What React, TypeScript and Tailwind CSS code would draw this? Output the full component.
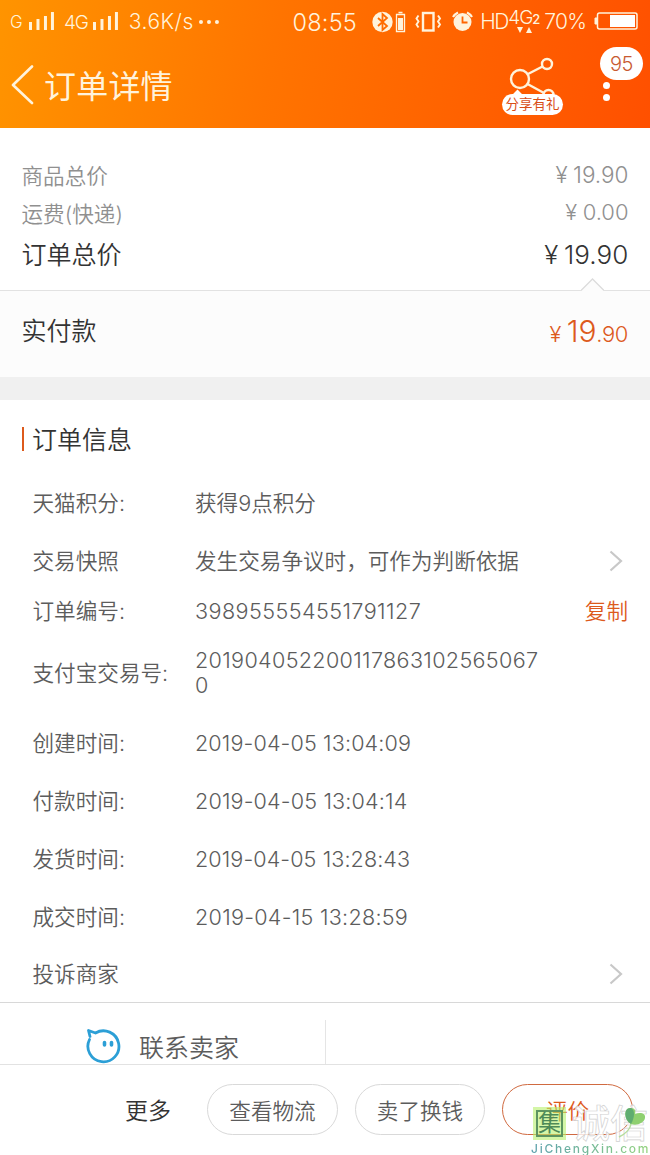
import clsx from 'clsx'

const rows = [
  { label: '天猫积分:', value: '获得9点积分', height: 'h-[57px]' },
  { label: '交易快照', value: '发生交易争议时，可作为判断依据', height: 'h-[58px]', arrow: true },
  { label: '订单编号:', value: '398955554551791127', height: 'h-[42px]', copy: true, tracking: 'tracking-[0.430px]' },
  { label: '支付宝交易号:', value: '2019040522001178631025650670', height: 'h-[82px]', tracking: 'tracking-[0.330px]' },
  { label: '创建时间:', value: '2019-04-05 13:04:09', height: 'h-[58px]', tracking: 'tracking-[0.120px]' },
  { label: '付款时间:', value: '2019-04-05 13:04:14', height: 'h-[58px]', tracking: 'tracking-[0.150px]' },
  { label: '发货时间:', value: '2019-04-05 13:28:43', height: 'h-[58px]', tracking: 'tracking-[0.080px]' },
  { label: '成交时间:', value: '2019-04-15 13:28:59', height: 'h-[58px]', tracking: 'tracking-[0.270px]' },
  { label: '投诉商家', value: '', height: 'h-[56px]', arrow: true },
]

function Signal() {
  return (
    <svg width="26" height="19" viewBox="0 0 26 19" fill="currentColor">
      <rect x="0" y="10" width="3" height="8" />
      <rect x="7.5" y="7" width="3" height="11" />
      <rect x="15" y="4" width="3" height="14" />
      <rect x="22" y="0" width="3" height="18" />
    </svg>
  )
}

function StatusIcons() {
  return (
    <svg className="shrink-0" width="102" height="24" viewBox="0 0 102 24" fill="none" stroke="currentColor">
      <circle cx="10.5" cy="12" r="10.2" fill="currentColor" stroke="none" />
      <path d="M6 8l9 8-4.500 4V4l4.500 4-9 8" stroke="#ff6c00" strokeWidth="1.8" />
      <path d="M24.500 4.500h8v17h-8zM26.500 2.500h4" strokeWidth="1.3" />
      <rect x="26" y="8" width="5" height="12" fill="currentColor" stroke="none" />
      <rect x="51" y="3" width="10.500" height="17.500" strokeWidth="2.400" />
      <path d="M46.500 5.500l-2 3 2 3-2 3 2 3M66 5.500l2 3-2 3 2 3-2 3" strokeWidth="1.900" />
      <circle cx="90.500" cy="12" r="9" fill="currentColor" stroke="none" />
      <path d="M81 7a13 13 0 0 1 5-4.500M100 7a13 13 0 0 0-5-4.500" strokeWidth="2.200" />
      <path d="M90.500 6.500v6h5" stroke="#ff6500" strokeWidth="1.800" />
    </svg>
  )
}

function StatusBar() {
  return (
    <div className="flex h-[43px] items-center pl-[10px] pr-[12px] text-[#fff3dc]">
      <span className="w-[19px] pt-[3px] text-[17px]">G</span>
      <Signal />
      <span className="ml-[9px] w-[29px] pt-[3px] text-[19px] tracking-[-1.200px]">4G</span>
      <Signal />
      <span className="ml-[10px] w-[68px] whitespace-nowrap text-[21px] tracking-[0.500px]">3.6K/s</span>
      <svg width="24" height="6" viewBox="0 0 24 6" fill="currentColor">
        <circle cx="4" cy="3" r="2" />
        <circle cx="12" cy="3" r="2" />
        <circle cx="20" cy="3" r="2" />
      </svg>
      <span className="ml-[72px] w-[80px] whitespace-nowrap pt-[2px] text-[23.500px] tracking-[0.200px]">08:55</span>
      <StatusIcons />
      <span className="ml-[6px] w-[28px] text-[21px] tracking-[-1.500px]">HD</span>
      <div className="relative h-[28px] w-[36px]">
        <div className="flex items-start leading-[20px] tracking-[-1px]">
          <span className="text-[19px]">4G</span>
          <span className="pt-[1px] text-[13px] font-medium">2</span>
        </div>
        <svg className="absolute left-[9px] top-[19px]" width="15" height="6" viewBox="0 0 15 6" fill="currentColor">
          <path d="M0 0h6L3 6zM9 6h6l-3-6z" />
        </svg>
      </div>
      <span className="w-[50px] whitespace-nowrap pt-px text-[21px] tracking-[-0.600px]">70%</span>
      <svg className="-mt-[2px] shrink-0" width="44" height="18" viewBox="0 0 44 18">
        <path d="M3 6H1v6h2" fill="currentColor" stroke="currentColor" />
        <rect x="3.500" y="1" width="39.500" height="16" rx="2" fill="none" stroke="currentColor" strokeWidth="1.500" />
        <rect x="16" y="3" width="25" height="12" fill="#fff" />
      </svg>
    </div>
  )
}

function Header() {
  return (
    <header className="h-[128px] bg-[linear-gradient(100deg,#ff9400_0%,#ff7400_42%,#ff5000_100%)]">
      <StatusBar />
      <div className="flex h-[85px] text-[#fff3dc]">
        <svg className="ml-[11px] mt-[22px]" width="24" height="40" viewBox="0 0 24 40" fill="none" stroke="currentColor" strokeWidth="2.600">
          <path d="M21 1.500L2 20l19 18" strokeLinecap="round" strokeLinejoin="round" />
        </svg>
        <h1 className="ml-[9px] mt-[21px] text-[32px] font-normal leading-[46px] tracking-[0.200px]">订单详情</h1>
        <div className="relative ml-auto mt-[13px] h-[60px] w-[62px]">
          <svg className="ml-[6px]" width="50" height="46" viewBox="0 0 50 46" fill="none" stroke="currentColor" strokeWidth="2.400">
            <circle cx="12" cy="23" r="9" />
            <circle cx="39" cy="8" r="5" />
            <circle cx="40.500" cy="39" r="5" />
            <path d="M20 18l14.500-7.500M19.500 28L36 37" />
          </svg>
          <div className="absolute left-[12px] top-[35px] size-[7px] rotate-45 bg-white" />
          <div className="absolute left-0 top-[38px] h-[21px] w-[61px] whitespace-nowrap rounded-full bg-white text-center text-[13.500px] font-normal leading-[21px] text-[#d94e18]">分享有礼</div>
        </div>
        <div className="relative ml-[36px] mt-[4px] flex w-[50px] flex-col">
          <div className="h-[33px] w-[43px] rounded-full bg-white text-center text-[20px] leading-[34px] tracking-[-0.400px] text-[#c85a32]">95</div>
          <div className="ml-[3px] mt-[2px] flex flex-col gap-[5px]">
            <i className="size-[7px] rounded-full bg-white" />
            <i className="size-[7px] rounded-full bg-white" />
          </div>
        </div>
      </div>
    </header>
  )
}

function Arrow() {
  return (
    <svg width="14" height="22" viewBox="0 0 14 22" fill="none" stroke="#c8c8c8" strokeWidth="2.200">
      <path d="M1.500 1.500L12 11 1.500 20.500" />
    </svg>
  )
}

function Yen() {
  return <span className="mr-[5.500px]">¥</span>
}

function Prices() {
  return (
    <section>
      <div className="relative h-[163px] border-b border-[#e2e2e2] pl-[21.500px] pr-[21.500px] pt-[29px]">
        <div className="flex h-[38px] items-center justify-between text-[21.600px] text-[#909090]">
          <span>商品总价</span>
          <span className="pb-[3px] text-[22.500px]"><Yen />19.90</span>
        </div>
        <div className="flex h-[38px] items-center justify-between text-[21.600px] text-[#909090]">
          <span>运费(快递)</span>
          <span className="pb-[3px] text-[22px]"><Yen />0.00</span>
        </div>
        <div className="flex h-[46px] items-center justify-between text-[25px] text-[#333]">
          <span>订单总价</span>
          <span className="pb-[3px] text-[26px] tracking-[0.100px]"><Yen />19.90</span>
        </div>
        <svg className="absolute bottom-[-2px] left-[581px]" width="23" height="14" viewBox="0 0 23 14">
          <path d="M0 12.500L11.500 1 23 12.500V14H0z" fill="#fcfcfc" />
          <path d="M0 12.500L11.500 1 23 12.500" fill="none" stroke="#dcdcdc" strokeWidth="1.300" />
        </svg>
      </div>
      <div className="flex h-[86px] items-center justify-between bg-[#fcfcfc] pb-[4px] pl-[21.500px] pr-[22px] text-[25px] text-[#333]">
        <span>实付款</span>
        <span className="pb-[2px] text-[22px] text-[#dd5a1c]">
          <Yen />
          <span className="text-[30px] tracking-[-0.200px]">19</span>
          <span className="tracking-[-0.400px]">.90</span>
        </span>
      </div>
    </section>
  )
}

function OrderInfo() {
  return (
    <section className="h-[603px] border-b border-[#d8d8d8]">
      <div className="flex h-[75px] items-center pl-[22px] pt-[6px] text-[25px] text-[#333]">
        <i className="mb-[4px] mr-[8px] h-[24px] w-[2px] bg-[#dd5a1c]" />
        <h2>订单信息</h2>
      </div>
      {rows.map(row => (
        <div key={row.label} className={clsx('flex items-center pl-[32.500px] pr-[22px] text-[21.600px] text-[#5c5c5c]', row.height)}>
          <span className="w-[162.500px] shrink-0 whitespace-nowrap">{row.label}</span>
          <span className={clsx('w-[350px] break-all leading-[25px]', row.tracking)}>{row.value}</span>
          {row.arrow && <span className="ml-auto mr-[5px]"><Arrow /></span>}
          {row.copy && <button className="ml-auto shrink-0 text-[#dd5a1c]">复制</button>}
        </div>
      ))}
    </section>
  )
}

function Contact() {
  return (
    <section className="flex h-[62px] overflow-hidden border-b border-[#e2e2e2]">
      <div className="mt-[17px] flex w-[326px] border-r border-[#e5e5e5] pl-[86px]">
        <svg className="mt-[8px]" width="36" height="36" viewBox="0 0 36 36" fill="none" stroke="#2c9fd6" strokeWidth="2.800">
          <path d="M3.500 11.500a15.500 15.500 0 1 0 6-6.500L2.500 2.500l1.500 6" strokeLinejoin="round" strokeLinecap="round" />
          <path d="M18.500 14.500v2.500M25.500 14.500v2.500" strokeWidth="3.600" strokeLinecap="round" />
        </svg>
        <span className="ml-[17px] mt-[10px] text-[25px] leading-[36px] text-[#5c5c5c]">联系卖家</span>
      </div>
    </section>
  )
}

function Watermark() {
  return (
    <div className="absolute left-[530px] top-[41px] h-[50px] w-[120px]">
      <div className="absolute left-[3px] top-[1px] size-[33px] bg-[#b8f06c]/60 p-[3px]">
        <div className="flex size-[27px] items-center justify-center border-2 border-[#5d9461] text-[23px] font-normal leading-none text-[#4d8a58]">集</div>
      </div>
      <div className="absolute left-[42px] top-[-3px] whitespace-nowrap text-[38px] font-medium leading-[40px] text-white/80 [-webkit-text-stroke:0.700px_#d0d0d0]">诚信</div>
      <svg className="absolute left-[88px] top-0" width="30" height="34" viewBox="0 0 30 34">
        <path d="M13 18C5 13 6 1 13 2c4 0 5 3 4 6 5-2 11-1 10 4-1 5-8 8-14 6z" fill="#8fd070" />
        <path d="M13 18C5 13 6 1 13 2c4 2 4 9 0 16z" fill="#5fac70" />
        <path d="M13 18C12 24 7 28 1 31" fill="none" stroke="#b5dd9e" strokeWidth="1.500" />
      </svg>
      <div className="absolute left-[1px] top-[35px] whitespace-nowrap text-[12px] font-medium leading-[15px] tracking-[1.750px]">
        <span className="bg-linear-to-r from-[#5a9fab] to-[#93d37c] bg-clip-text text-transparent">JiChengXin.com</span>
      </div>
    </div>
  )
}

function Footer() {
  return (
    <footer className="relative flex h-[90px] overflow-hidden pl-[125px] pt-[19px] text-[21.600px] text-[#5c5c5c]">
      <button className="h-[51px] w-[46px] whitespace-nowrap pt-[3px] text-[23px] text-[#333]">更多</button>
      <button className="ml-[36px] h-[51px] w-[131px] rounded-full border border-[#d9d9d9] pt-[3px]">查看物流</button>
      <button className="ml-[17px] h-[51px] w-[130px] rounded-full border border-[#d9d9d9] pt-[3px]">卖了换钱</button>
      <button className="ml-[17px] h-[51px] w-[131px] rounded-full border border-[#d06a40] pt-[3px] text-[#dd5a1c]">评价</button>
      <Watermark />
    </footer>
  )
}

export default function App() {
  return (
    <div className="h-[1155px] w-[650px] overflow-hidden bg-white font-[Inter,'Noto_Sans_CJK_SC',sans-serif] font-[350]">
      <Header />
      <Prices />
      <div className="h-[23px] bg-[#f0f0f0]" />
      <OrderInfo />
      <Contact />
      <Footer />
    </div>
  )
}
